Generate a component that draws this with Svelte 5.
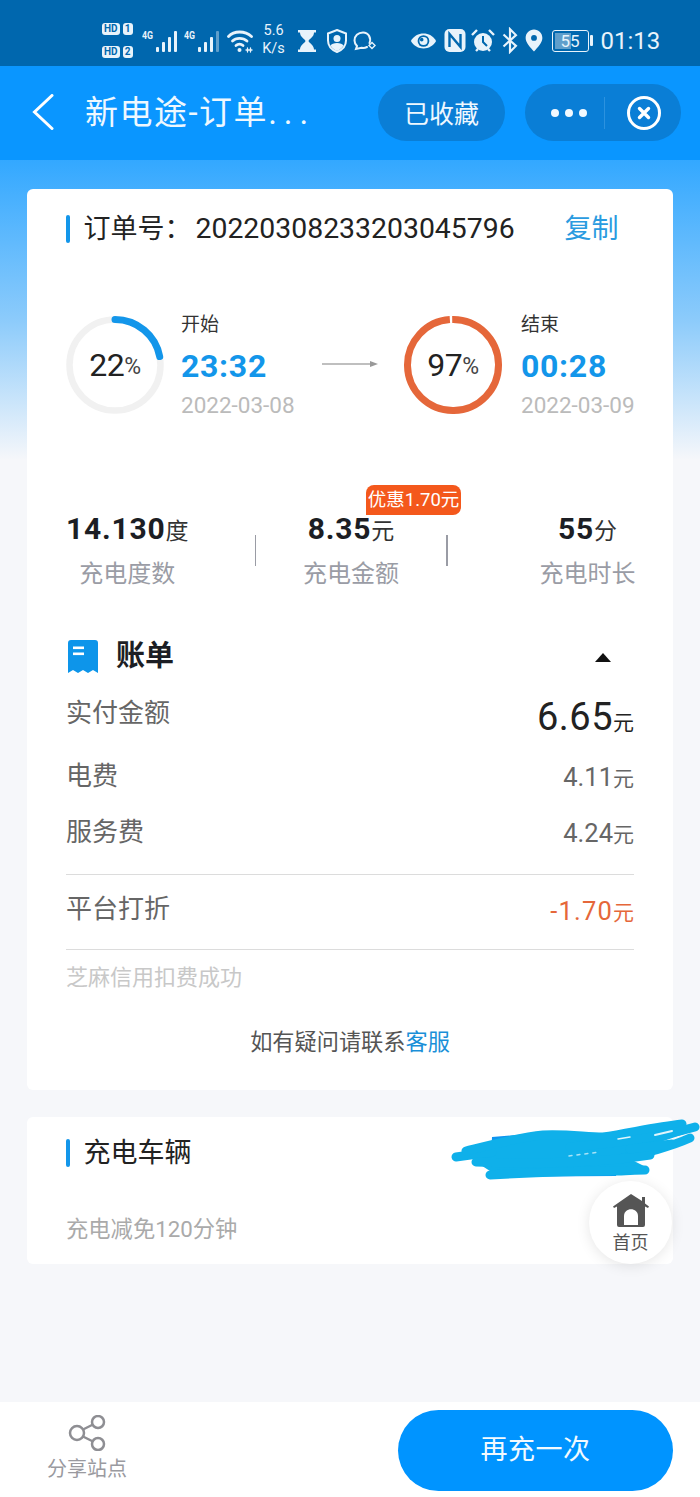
<script>
  const stats = [
    { value: '14.130', unit: '度', label: '充电度数', cls: 'first' },
    { value: '8.35', unit: '元', label: '充电金额', cls: 'second', badge: '优惠1.70元' },
    { value: '55', unit: '分', label: '充电时长', cls: 'third' }
  ];

  // x, height of each signal bar
  const bars = [
    [1, 5],
    [7, 10],
    [13, 15],
    [19, 21]
  ];

  function ringDash(percent, r) {
    const len = 2 * Math.PI * r;
    return `${(len * percent) / 100} ${len}`;
  }
</script>

<div class="page">
  <div class="status">
    <div class="hd">
      <div class="hd-line"><span class="hd-tag">HD</span><span class="hd-num">1</span></div>
      <div class="hd-line"><span class="hd-tag">HD</span><span class="hd-num">2</span></div>
    </div>
    <div class="signal">
      <span class="four-g">4G</span>
      <svg width="23" height="22" viewBox="0 0 23 22">
        {#each bars as b}
          <rect x={b[0]} y={22 - b[1]} width="3" height={b[1]} rx="1" fill="#e8f3fb" />
        {/each}
      </svg>
    </div>
    <div class="signal two">
      <span class="four-g">4G</span>
      <svg width="23" height="22" viewBox="0 0 23 22">
        {#each bars as b, i}
          <rect x={b[0]} y={22 - b[1]} width="3" height={b[1]} rx="1" fill={i === 3 ? '#5f9ecb' : '#e8f3fb'} />
        {/each}
      </svg>
    </div>
    <svg class="wifi" width="26" height="24" viewBox="0 0 26 24" fill="none" stroke="#e8f3fb" stroke-width="2.800" stroke-linecap="round">
      <path d="M1.500 7.500 C7 1.500 18 1.500 24.500 7.500" />
      <path d="M5.500 12 C9 8.500 16 8.500 20 12" />
      <path d="M9 16.500 C11 14.800 14 14.800 16 16.500" />
      <circle cx="12.500" cy="21" r="2" fill="#e8f3fb" stroke="none" />
      <path d="M19 21 H25" stroke-width="1.300" />
      <path d="M20.500 19 V23 M23.500 19 V23" stroke-width="1.300" />
    </svg>
    <div class="speed"><span>5.6</span><span>K/s</span></div>
    <svg class="glass" width="18" height="22" viewBox="0 0 18 22">
      <path d="M0 0 H18 V2.500 H16 C16 7 11.500 8.500 10.500 11 C11.500 13.500 16 15 16 19.500 H18 V22 H0 V19.500 H2 C2 15 6.500 13.500 7.500 11 C6.500 8.500 2 7 2 2.500 H0 Z" fill="#e8f3fb" />
    </svg>
    <svg class="shield" width="20" height="24" viewBox="0 0 20 24">
      <path d="M10 1 L19 4.500 V11.500 C19 17 15 21 10 23 C5 21 1 17 1 11.500 V4.500 Z" fill="none" stroke="#e8f3fb" stroke-width="2" />
      <circle cx="10" cy="9.500" r="3.500" fill="#e8f3fb" />
      <path d="M3.500 16.500 C5 13 15 13 16.500 16.500 C15 19.500 12 21 10 22 C8 21 5 19.500 3.500 16.500 Z" fill="#e8f3fb" />
    </svg>
    <svg class="chat" width="23" height="20" viewBox="0 0 23 20" fill="none" stroke="#e8f3fb" stroke-width="2">
      <path d="M16.500 12 C18.500 7 15.500 1.500 10 1.500 C5 1.500 1.500 5 1.500 9.500 C1.500 12 2.500 13.500 4 15 L3 18 L8.500 16.800 C10.500 17.200 12.500 16.800 14 16" stroke-linecap="round" />
      <path d="M19 11.500 L22 14.500 L19 17.500 L16 14.500 Z" stroke-width="1.400" />
    </svg>

    <svg class="eye" width="27" height="20" viewBox="0 0 30 22">
      <path d="M1 11 C7 0 23 0 29 11 C23 22 7 22 1 11 Z" fill="#e8f3fb" />
      <circle cx="15" cy="11" r="6.500" fill="#0067ae" />
      <circle cx="15" cy="11" r="4.500" fill="#e8f3fb" />
      <circle cx="13" cy="9.500" r="2" fill="#0067ae" />
    </svg>
    <svg class="nfc" width="22" height="23" viewBox="0 0 21 23">
      <rect width="21" height="23" rx="5" fill="#e8f3fb" />
      <path d="M5 18 V5 L16 18 V5" fill="none" stroke="#0067ae" stroke-width="2.400" />
    </svg>
    <svg class="alarm" width="24" height="24" viewBox="0 0 24 24">
      <circle cx="12" cy="13" r="9" fill="#e8f3fb" />
      <path d="M12 7 V13 L16 17" fill="none" stroke="#0067ae" stroke-width="2" />
      <path d="M1 6 L6 1 M23 6 L18 1 M5 22 L7 20 M19 22 L17 20" stroke="#e8f3fb" stroke-width="2.400" />
    </svg>
    <svg class="bt" width="16" height="27" viewBox="0 0 14 25" fill="none" stroke="#e8f3fb" stroke-width="2">
      <path d="M1 7 L12.500 17.500 L7 23 V2 L12.500 7.500 L1 18" />
    </svg>
    <svg class="pin" width="18" height="23" viewBox="0 0 17 22">
      <path d="M8.500 0.500 C13 0.500 16.500 4 16.500 8.500 C16.500 13 12 17.500 8.500 21.500 C5 17.500 0.500 13 0.500 8.500 C0.500 4 4 0.500 8.500 0.500 Z" fill="#e8f3fb" />
      <circle cx="8.500" cy="8.500" r="2.800" fill="#0067ae" />
    </svg>
    <div class="battery">
      <div class="battery-box"><div class="battery-fill"></div><span>55</span></div>
      <div class="battery-cap"></div>
    </div>
    <span class="clock">01:13</span>
  </div>

  <div class="nav">
    <svg class="back" width="22" height="36" viewBox="0 0 22 36" fill="none" stroke="#fff" stroke-width="3" stroke-linecap="round">
      <path d="M20 1.500 L2.500 18 L20 34.500" />
    </svg>
    <span class="nav-title">新电途-订单<span class="nav-dots">...</span></span>
    <button class="fav">已收藏</button>
    <div class="capsule">
      <div class="dots"><i></i><i></i><i></i></div>
      <div class="capsule-sep"></div>
      <svg width="34" height="34" viewBox="0 0 34 34" fill="none" stroke="#fff">
        <circle cx="17" cy="17" r="15.500" stroke-width="3" />
        <path d="M12.500 12.500 L21.500 21.500 M21.500 12.500 L12.500 21.500" stroke-width="3.400" stroke-linecap="round" />
      </svg>
    </div>
  </div>

  <div class="content">
    <div class="card main">
      <div class="head">
        <span class="mark"></span>
        <span class="head-text">订单号：</span>
        <span class="order-no">20220308233203045796</span>
        <span class="copy">复制</span>
      </div>

      <div class="times">
        <div class="ring-wrap">
          <svg width="98" height="98" viewBox="0 0 98 98" fill="none">
            <circle cx="49" cy="49" r="45.500" stroke="#f1f1f1" stroke-width="6.500" />
            <circle cx="49" cy="49" r="45.500" stroke="#1396ea" stroke-width="7" stroke-linecap="round" stroke-dasharray={ringDash(22, 45.5)} transform="rotate(-90 49 49)" />
          </svg>
          <div class="ring-label">22<small>%</small></div>
        </div>
        <div class="time-col">
          <span class="time-cap">开始</span>
          <span class="time-val">23:32</span>
          <span class="time-date">2022-03-08</span>
        </div>
        <svg class="arrow" width="56" height="10" viewBox="0 0 56 10">
          <path d="M0 5 H50" stroke="#aaa" stroke-width="1.500" />
          <path d="M48 2 L56 5 L48 8 Z" fill="#999" />
        </svg>
        <div class="ring-wrap">
          <svg width="98" height="98" viewBox="0 0 98 98" fill="none">
            <circle cx="49" cy="49" r="45.500" stroke="#e5673a" stroke-width="7" stroke-dasharray={ringDash(99, 45.5)} transform="rotate(-91 49 49)" />
          </svg>
          <div class="ring-label">97<small>%</small></div>
        </div>
        <div class="time-col end">
          <span class="time-cap">结束</span>
          <span class="time-val">00:28</span>
          <span class="time-date">2022-03-09</span>
        </div>
      </div>

      <div class="stats">
        {#each stats as s, i}
          {#if i > 0}<div class="stat-sep {s.cls}"></div>{/if}
          <div class="stat {s.cls}">
            {#if s.badge}<span class="badge">{s.badge}</span>{/if}
            <div class="stat-val">{s.value}<small>{s.unit}</small></div>
            <div class="stat-label">{s.label}</div>
          </div>
        {/each}
      </div>

      <div class="bill-head">
        <svg width="30" height="33" viewBox="0 0 30 33">
          <path d="M3 0 H27 A3 3 0 0 1 30 3 V33 L25 30 L20 33 L15 30 L10 33 L5 30 L0 33 V3 A3 3 0 0 1 3 0 Z" fill="#0d95ea" />
          <rect x="5" y="6.500" width="11" height="2.600" fill="#fff" />
          <rect x="5" y="12.500" width="11" height="2.600" fill="#fff" />
        </svg>
        <span class="bill-title">账单</span>
        <span class="tri"></span>
      </div>

      <div class="row total">
        <span class="row-name">实付金额</span>
        <span class="row-val big">6.65<small>元</small></span>
      </div>
      <div class="row fee">
        <span class="row-name">电费</span>
        <span class="row-val">4.11<small>元</small></span>
      </div>
      <div class="row fee service">
        <span class="row-name">服务费</span>
        <span class="row-val">4.24<small>元</small></span>
      </div>
      <div class="row discount">
        <span class="row-name">平台打折</span>
        <span class="row-val minus">-1.70<small>元</small></span>
      </div>
      <div class="credit">芝麻信用扣费成功</div>
      <div class="contact">如有疑问请联系<span>客服</span></div>
    </div>

    <div class="card vehicle">
      <div class="head">
        <span class="mark"></span>
        <span class="head-text">充电车辆</span>
      </div>
      <div class="waiver">充电减免120分钟</div>

      <svg class="scribble" width="250" height="64" viewBox="0 0 250 64" fill="none" stroke="#0fb0ea" stroke-width="9" stroke-linecap="round">
        <path d="M42 20 L90 16 L110 50 L168 50 L166 59 L40 60 Z" fill="#0f94f0" stroke="none" />
        <path d="M14 34 L42 24 L93 15 L153 19 L232 7 L240 15 L172 38 L196 50 L167 53 L40 54 L26 45 Z" fill="#0fb0ea" stroke="none" />
        <path d="M6 40 L42 35" />
        <path d="M16 34 C40 28 70 20 93 18 C120 17 135 20 153 20 C180 16 205 10 232 7" />
        <path d="M120 30 C170 26 210 20 245 10" />
        <path d="M170 42 C195 36 220 30 240 21" />
        <path d="M40 58 C90 55 130 54 165 54 C175 54 185 53 195 53" />
        <path d="M26 45 C80 47 150 46 200 38" />
        <path d="M180 32 L222 27" />
        <path d="M205 18 L222 14" stroke="#dff5fc" stroke-width="2" />
        <path d="M168 22 L180 20" stroke="#dff5fc" stroke-width="1.500" />
        <path d="M119 39 L150 35" stroke="#a9e3f7" stroke-width="1.500" stroke-dasharray="3 5" />
      </svg>
    </div>

    <div class="home">
      <svg width="36" height="33" viewBox="0 0 36 33">
        <path d="M18 0 L29 7 V3 H32 V9.500 L36 12.500 L35 14 L32 12.500 V31 A2 2 0 0 1 30 33 H6 A2 2 0 0 1 4 31 V12.500 L1 14 L0 12.500 Z" fill="#555" />
        <path d="M11 31 V22 C11 13 25 13 25 22 V31 Z" fill="#fff" />
      </svg>
      <span>首页</span>
    </div>
  </div>

  <div class="footer">
    <div class="share">
      <svg width="38" height="36" viewBox="0 0 38 36" fill="none" stroke="#8e8e93" stroke-width="2.500">
        <circle cx="9" cy="18" r="7" />
        <circle cx="30" cy="7" r="6" />
        <circle cx="30" cy="29" r="6" />
        <path d="M15 14.500 L25 9.500 M15 21.500 L25 26.500" />
      </svg>
      <span>分享站点</span>
    </div>
    <button class="again">再充一次</button>
  </div>
</div>

<style>
  :global(body) {
    margin: 0;
    background: #f6f7fa;
  }

  .page {
    width: 700px;
    height: 1497px;
    display: flex;
    flex-direction: column;
    overflow: hidden;
    font-family: Roboto, "Noto Sans CJK SC", sans-serif;
    background: linear-gradient(#33a8ff 160px, #8ccbfb 320px, #f6f7fa 460px);
  }

  button {
    border: none;
    font-family: inherit;
    padding: 0;
  }

  /* status bar */
  .status {
    height: 66px;
    flex: none;
    background: #0067ae;
    display: flex;
    align-items: center;
    padding-left: 102px;
    padding-top: 15px;
    box-sizing: border-box;
    color: #e8f3fb;
  }

  .hd {
    display: flex;
    flex-direction: column;
    gap: 11px;
  }

  .hd-line {
    display: flex;
    gap: 3px;
  }

  .hd-tag,
  .hd-num {
    background: #e8f3fb;
    color: #0067ae;
    font-size: 10px;
    font-weight: 700;
    line-height: 12px;
    height: 12px;
    border-radius: 3px;
    padding: 0 2px;
    text-align: center;
  }

  .hd-num {
    width: 6px;
  }

  .signal {
    display: flex;
    align-items: flex-start;
    margin-left: 9px;
    width: 35px;
    height: 22px;
  }

  .signal.two {
    margin-left: 7px;
  }

  .four-g {
    font-size: 11px;
    font-weight: 700;
    line-height: 12px;
    transform: scaleX(0.8);
    transform-origin: left;
    width: 13px;
    flex: none;
  }

  .signal svg {
    flex: none;
  }

  .wifi {
    margin-left: 8px;
  }

  .speed {
    display: flex;
    flex-direction: column;
    align-items: center;
    font-size: 14.500px;
    line-height: 18px;
    margin-left: 8px;
    width: 26px;
    margin-top: -1px;
  }

  .glass {
    margin-left: 11px;
  }

  .shield {
    margin-left: 11px;
  }

  .chat {
    margin-left: 6px;
  }

  .eye {
    margin-left: 34px;
  }

  .nfc {
    margin-left: 7px;
  }

  .alarm {
    margin-left: 5px;
  }

  .bt {
    margin-left: 7px;
  }

  .pin {
    margin-left: 7px;
  }

  .battery {
    display: flex;
    align-items: center;
    gap: 1px;
    margin-left: 9px;
  }

  .battery-box {
    width: 35px;
    height: 20px;
    border: 1.500px solid #e8f3fb;
    border-radius: 3px;
    position: relative;
    font-size: 17px;
    line-height: 20px;
    text-align: center;
  }

  .battery-box span {
    position: relative;
  }

  .battery-fill {
    position: absolute;
    inset: 2px auto 2px 2px;
    width: 16px;
    background: #5f9ecb;
  }

  .battery-cap {
    width: 3px;
    height: 11px;
    background: #e8f3fb;
    border-radius: 1px;
  }

  .clock {
    font-size: 24px;
    margin-left: 8px;
    line-height: 28px;
  }

  /* nav */
  .nav {
    height: 94px;
    flex: none;
    background: #0a96ff;
    display: flex;
    align-items: center;
    box-sizing: border-box;
    padding: 0 19px 0 32px;
    color: #fff;
  }

  .back {
    margin-top: -2px;
  }

  .nav-title {
    font-size: 33px;
    margin-left: 31px;
    width: 293px;
    white-space: nowrap;
    letter-spacing: 1.500px;
    color: #eef8ff;
    margin-top: -7px;
  }

  .nav-dots {
    letter-spacing: 7px;
  }

  .fav {
    width: 127px;
    height: 57px;
    border-radius: 29px;
    background: #0a7ed6;
    color: #eef8ff;
    font-size: 25px;
    margin-top: -1px;
    padding-bottom: 2px;
  }

  .capsule {
    width: 156px;
    height: 57px;
    border-radius: 29px;
    background: #0a7ed6;
    margin-left: 20px;
    margin-top: -1px;
    display: flex;
    align-items: center;
    box-sizing: border-box;
    padding-left: 26px;
  }

  .dots {
    display: flex;
    gap: 6px;
    width: 53px;
  }

  .dots i {
    width: 8px;
    height: 8px;
    border-radius: 50%;
    background: #f2f9ff;
  }

  .capsule-sep {
    width: 1px;
    height: 32px;
    background: #2c92df;
  }

  .capsule svg {
    margin-left: 22px;
  }

  /* body */
  .content {
    flex: 1;
    position: relative;
    padding: 29px 27px 0;
    display: flex;
    flex-direction: column;
    gap: 27px;
  }

  .card {
    background: #fff;
    border-radius: 6px;
    box-sizing: border-box;
    padding: 0 39px;
    position: relative;
  }

  .main {
    height: 901px;
    padding-top: 25px;
  }

  .head {
    display: flex;
    align-items: center;
    height: 30px;
    color: #222;
  }

  .mark {
    width: 3.500px;
    height: 28px;
    background: #1396ea;
    border-radius: 2px;
    margin-right: 14px;
    flex: none;
  }

  .head-text {
    font-size: 27px;
    line-height: 30px;
    width: 112px;
    white-space: nowrap;
  }

  .order-no {
    font-size: 28.400px;
    line-height: 30px;
    color: #222;
    width: 369px;
    white-space: nowrap;
  }

  .copy {
    font-size: 27px;
    line-height: 30px;
    color: #2a9be0;
  }

  .times {
    display: flex;
    align-items: flex-start;
    margin-top: 72px;
    height: 98px;
    margin-right: -40px;
  }

  .ring-wrap {
    position: relative;
    width: 98px;
    height: 98px;
    flex: none;
  }

  .ring-label {
    position: absolute;
    inset: 0;
    display: flex;
    align-items: center;
    justify-content: center;
    font-size: 32px;
    color: #222;
    letter-spacing: -0.500px;
  }

  .ring-label small {
    font-size: 23px;
    margin-top: 3px;
    color: #444;
  }

  .time-col {
    display: flex;
    flex-direction: column;
    margin-left: 17px;
    width: 141px;
    margin-top: -4px;
  }

  .time-col.end {
    margin-left: 19px;
  }

  .time-cap {
    font-size: 19px;
    line-height: 26px;
    color: #333;
  }

  .time-val {
    font-size: 32px;
    font-weight: 700;
    line-height: 36px;
    margin-top: 10px;
    letter-spacing: 0.700px;
    color: #1396ea;
  }

  .time-date {
    font-size: 22.500px;
    line-height: 26px;
    margin-top: 8px;
    color: #bbb;
    white-space: nowrap;
  }

  .arrow {
    flex: none;
    margin-top: 43px;
    margin-right: 26px;
  }

  .stats {
    display: flex;
    margin-top: 97px;
    height: 70px;
    align-items: flex-start;
  }

  .stat {
    text-align: center;
    position: relative;
    white-space: nowrap;
    width: 96px;
  }

  .stat.first {
    width: 123px;
  }

  .stat.second {
    margin-left: 47px;
  }

  .stat.third {
    margin-left: 92px;
  }

  .stat-sep {
    width: 1.500px;
    height: 31px;
    background: #9a9ca5;
    margin-top: 24px;
    flex: none;
  }

  .stat-sep.second {
    margin-left: 66px;
  }

  .stat-sep.third {
    margin-left: 47px;
  }

  .stat-val {
    font-size: 30px;
    font-weight: 700;
    line-height: 36px;
    color: #1c1e24;
    letter-spacing: 0.800px;
  }

  .stat-val small {
    font-size: 23px;
    font-weight: 400;
    letter-spacing: 0;
    color: #333;
  }

  .stat-label {
    font-size: 24px;
    line-height: 32px;
    margin-top: 8px;
    color: #9a9ca5;
  }

  .badge {
    position: absolute;
    left: 63px;
    top: -26px;
    height: 30px;
    width: 95px;
    line-height: 30px;
    font-size: 18.500px;
    color: #fff;
    text-align: center;
    background: #f4581c;
    border-radius: 8px 8px 8px 0;
  }

  .bill-head {
    display: flex;
    align-items: center;
    height: 33px;
    margin-top: 59px;
    margin-left: 2px;
  }

  .bill-title {
    font-size: 29px;
    font-weight: 700;
    color: #1c1e24;
    margin-left: 18px;
    line-height: 33px;
  }

  .tri {
    width: 0;
    height: 0;
    border-left: 8px solid transparent;
    border-right: 8px solid transparent;
    border-bottom: 9px solid #111;
    margin-left: auto;
    margin-right: 23px;
    margin-top: 1px;
  }

  .row {
    display: flex;
    justify-content: space-between;
    align-items: flex-end;
  }

  .row-name {
    font-size: 26px;
    line-height: 36px;
    color: #666;
  }

  .row-val {
    font-size: 25.500px;
    line-height: 30px;
    color: #666;
  }

  .row-val small {
    font-size: 21px;
    letter-spacing: 0;
  }

  .row-val.big {
    font-size: 38px;
    line-height: 44px;
    color: #222;
    letter-spacing: 0.500px;
  }

  .total {
    margin-top: 22px;
    height: 44px;
    align-items: flex-start;
  }

  .fee {
    margin-top: 19px;
    height: 36px;
  }

  .service {
    margin-top: 20px;
  }

  .discount {
    height: 76px;
    border-top: 1.500px solid #dcdcdc;
    border-bottom: 1.500px solid #dcdcdc;
    margin-top: 24px;
    padding-bottom: 6px;
    align-items: center;
    box-sizing: border-box;
  }

  .minus {
    color: #e5673a;
    margin-top: 6px;
    letter-spacing: 1.200px;
  }

  .credit {
    font-size: 22px;
    line-height: 28px;
    color: #c8c8c8;
    margin-top: 14px;
  }

  .contact {
    font-size: 22.200px;
    line-height: 30px;
    color: #555;
    text-align: center;
    margin-top: 35px;
  }

  .contact span {
    color: #1a8fd8;
  }

  .vehicle {
    height: 147px;
    padding-top: 21px;
  }

  .waiver {
    font-size: 22.300px;
    line-height: 28px;
    color: #aaa;
    margin-top: 47px;
  }

  .scribble {
    position: absolute;
    left: 423px;
    top: 0;
  }

  .home {
    position: absolute;
    left: 589px;
    top: 1021px;
    width: 83px;
    height: 83px;
    border-radius: 50%;
    background: #fff;
    box-shadow: 0 2px 14px rgba(0, 0, 0, 0.1);
    display: flex;
    flex-direction: column;
    align-items: center;
    box-sizing: border-box;
    padding-top: 13px;
    gap: 4px;
    color: #555;
    font-size: 18px;
    line-height: 24px;
  }

  /* bottom bar */
  .footer {
    height: 95px;
    flex: none;
    background: #fff;
    display: flex;
    justify-content: space-between;
    align-items: flex-start;
    box-sizing: border-box;
    padding: 8px 27px 0 47px;
  }

  .share {
    display: flex;
    flex-direction: column;
    align-items: center;
    margin-top: 5px;
    gap: 4px;
  }

  .share span {
    font-size: 20px;
    line-height: 28px;
    color: #9a9a9f;
  }

  .again {
    width: 275px;
    height: 81px;
    border-radius: 41px;
    background: #0094ff;
    color: #f2faff;
    font-size: 27px;
    letter-spacing: 0.500px;
    padding-bottom: 6px;
  }
</style>
